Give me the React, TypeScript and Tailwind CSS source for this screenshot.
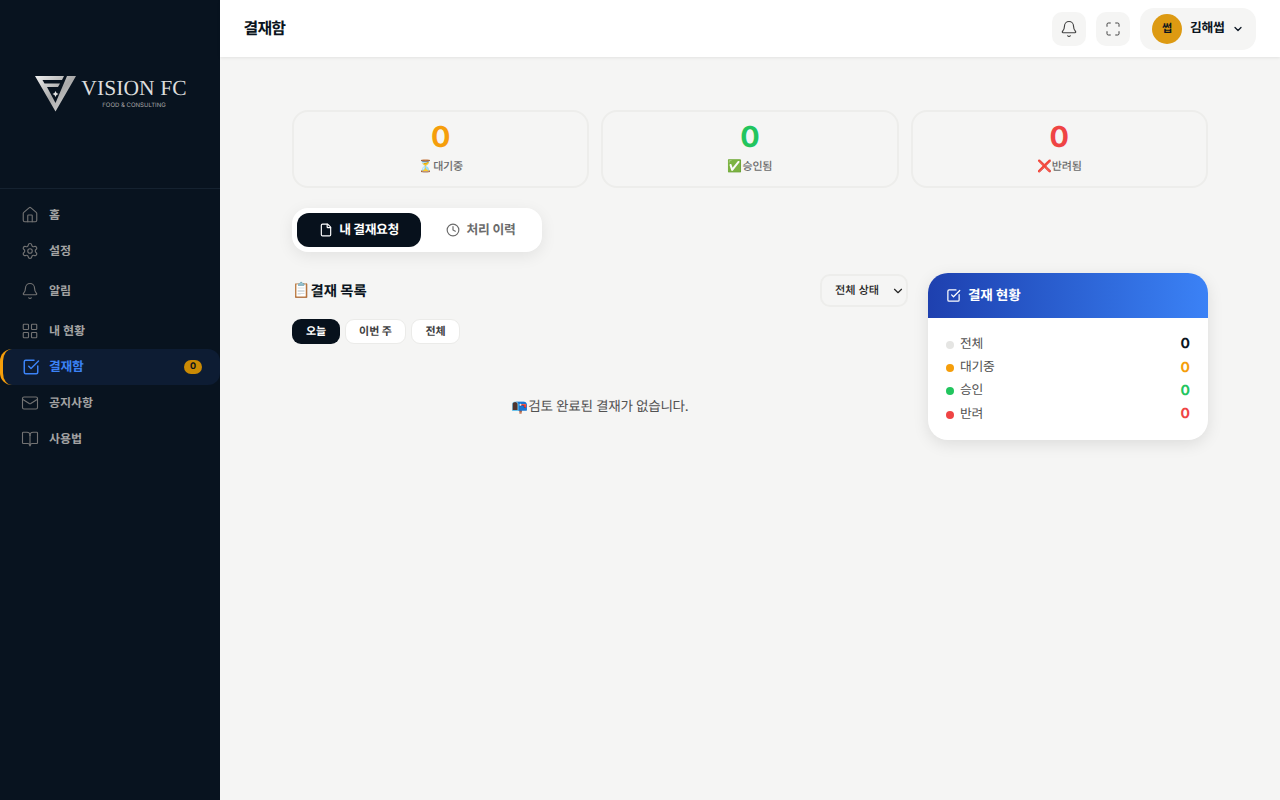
import React from "react";
import { Bell, BookOpen, ChevronDown, Clock, File, House, LayoutGrid, Mail, Maximize, Settings } from "lucide-react";

const CheckSquare = ({ className = "" }: { className?: string }) => (
  <svg viewBox="0 0 24 24" fill="none" stroke="currentColor" strokeWidth="2" strokeLinecap="round" strokeLinejoin="round" className={className}>
    <path d="M21 10.5V19a2 2 0 0 1-2 2H5a2 2 0 0 1-2-2V5a2 2 0 0 1 2-2h11" />
    <path d="m9 11 3 3L22 4" />
  </svg>
);

const Logo = () => (
  <div className="flex items-start">
    <svg viewBox="0 0 44 38" className="w-[44px] h-[38px] shrink-0">
      <defs>
        <linearGradient id="lg" x1="0" y1="0" x2="1" y2="1">
          <stop offset="0" stopColor="#f0f0f0" />
          <stop offset="0.5" stopColor="#a9a9a9" />
          <stop offset="1" stopColor="#e2e2e2" />
        </linearGradient>
      </defs>
      <path d="M1 1 H30 L28 5 H8.5 L10.5 8.5 H26 L24 12 H13 L21.5 28 L33 1 H42 L21.5 36.5 Z" fill="url(#lg)" />
      <path d="M21.5 16 L22.5 18 L24.5 19 L22.5 20 L21.5 22 L20.5 20 L18.5 19 L20.5 18 Z" fill="#e5e5e5" />
    </svg>
    <div className="ml-[3px] flex flex-col items-center pt-[1px]">
      <div className="text-[21.5px] tracking-[0.1px] leading-[24px] text-[#dcdcdc] font-['Liberation_Serif',serif] whitespace-nowrap">VISION FC</div>
      <div className="text-[6px] leading-[8px] mt-[2px] text-[#a8a8a8] font-['Inter',sans-serif] whitespace-nowrap">FOOD &amp; CONSULTING</div>
    </div>
  </div>
);

const nav = [
  { label: "홈", Icon: House, h: 36 },
  { label: "설정", Icon: Settings, h: 36 },
  { label: "알림", Icon: Bell, h: 44 },
  { label: "내 현황", Icon: LayoutGrid, h: 36 },
];
const nav2 = [
  { label: "공지사항", Icon: Mail },
  { label: "사용법", Icon: BookOpen },
];

const Stat = ({ value, color, emoji, label }: { value: number; color: string; emoji: string; label: string }) => (
  <div className="h-[78px] rounded-2xl border-2 border-[#ededeb] flex flex-col items-center pt-[6px]">
    <div className={`text-[28.8px] leading-[38px] font-bold ${color}`}>{value}</div>
    <div className="text-[11px] leading-[16px] tracking-[-0.02em] font-medium text-[#6b6b6b] mt-[2px] flex items-center">
      <span className="text-[12px] leading-[16px] font-bold">{emoji}</span>
      <span>{label}</span>
    </div>
  </div>
);

const Row = ({ dot, label, color }: { dot: string; label: string; color: string }) => (
  <div className="flex items-center justify-between h-[23.4px]">
    <div className="flex items-center gap-[6px]">
      <span className={`w-[8px] h-[8px] rounded-full mt-[2px] ${dot}`} />
      <span className="text-[12.8px] text-[#525252] pt-[1px] tracking-[-0.02em]">{label}</span>
    </div>
    <span className={`text-[14px] font-bold ${color}`}>0</span>
  </div>
);

export default function App() {
  return (
    <div className="flex h-[800px] w-[1280px] overflow-hidden bg-[#f5f5f4] [text-rendering:geometricPrecision] font-['Inter','Noto_Sans_CJK_KR',sans-serif]">
      <aside className="w-[220px] shrink-0 bg-[#08131f] flex flex-col">
        <div className="h-[189px] border-b border-[#152230] flex justify-center pt-[75px] pl-[1px]">
          <Logo />
        </div>
        <nav className="pt-[8px] flex flex-col">
          {nav.map(({ label, Icon, h }) => (
            <div key={label} className="flex items-center pl-[21px] gap-[10px] text-[#a3a3a3]" style={{ height: h }}>
              <Icon className="w-[18px] h-[18px] text-[#737373]" strokeWidth={1.5} />
              <span className="text-[12px] font-semibold">{label}</span>
            </div>
          ))}
          <div className="h-[36px] flex items-center pl-[19px] pr-[18px] gap-[9px] bg-[#0d1c33] rounded-xl border-l-[3px] border-[#f59e0b]">
            <CheckSquare className="w-[18px] h-[18px] text-[#3b82f6]" />
            <span className="text-[12.8px] tracking-[-0.02em] font-semibold text-[#3b82f6] pt-[1px]">결재함</span>
            <span className="ml-auto w-[18px] h-[14px] rounded-full bg-[#ca8a04] text-[#07111c] text-[9px] font-bold flex items-center justify-center">0</span>
          </div>
          {nav2.map(({ label, Icon }) => (
            <div key={label} className="h-[36px] flex items-center pl-[21px] gap-[10px] text-[#a3a3a3]">
              <Icon className="w-[18px] h-[18px] text-[#737373]" strokeWidth={1.5} />
              <span className="text-[12px] font-semibold">{label}</span>
            </div>
          ))}
        </nav>
      </aside>
      <div className="flex-1 flex flex-col min-w-0">
        <header className="h-[57px] bg-white shadow-[0_1px_3px_rgba(0,0,0,0.08)] flex items-center pl-[23.5px] pr-[24px] z-10">
          <h1 className="text-[16px] tracking-[-0.8px] font-bold text-[#0a1420] pb-[2px]">결재함</h1>
          <div className="ml-auto flex items-center gap-[10px]">
            <button className="w-[34px] h-[34px] rounded-[10px] bg-[#f5f5f4] flex items-center justify-center text-[#404040]">
              <Bell className="w-[18px] h-[18px]" strokeWidth={1.5} />
            </button>
            <button className="w-[34px] h-[34px] rounded-[10px] bg-[#f5f5f4] flex items-center justify-center text-[#404040]">
              <Maximize className="w-[16px] h-[16px]" strokeWidth={1.5} />
            </button>
            <div className="h-[42px] w-[116px] rounded-[14px] bg-[#f5f5f4] flex items-center pl-[12px]">
              <div className="w-[30px] h-[30px] rounded-full bg-[#dd9a12] flex items-center justify-center text-[11px] font-bold text-[#0a1420]">썹</div>
              <span className="ml-[8px] text-[12.8px] tracking-[-0.02em] font-semibold text-[#0a1420] pt-[1px]">김해썹</span>
              <ChevronDown className="ml-[7px] w-[12px] h-[12px] text-[#0a1420]" strokeWidth={2.5} />
            </div>
          </div>
        </header>
        <main className="flex-1 px-[72px] pt-[53px]">
          <div className="grid grid-cols-3 gap-[12px]">
            <Stat value={0} color="text-[#f59e0b]" emoji="⏳" label="대기중" />
            <Stat value={0} color="text-[#22c55e]" emoji="✅" label="승인됨" />
            <Stat value={0} color="text-[#ef4444]" emoji="❌" label="반려됨" />
          </div>
          <div className="mt-[20px] w-[250px] h-[44px] bg-white rounded-2xl shadow-[0_4px_16px_rgba(0,0,0,0.08)] p-[5px] flex">
            <div className="w-[124px] h-[34px] rounded-xl bg-[#07111c] text-white flex items-center justify-center gap-[6px]">
              <File className="w-[14px] h-[14px]" strokeWidth={2} />
              <span className="text-[12.8px] tracking-[-0.03em] font-bold pt-[1px]">내 결재요청</span>
            </div>
            <div className="flex-1 flex items-center justify-center gap-[7px] text-[#6b6b6b] pl-[3px]">
              <Clock className="w-[14px] h-[14px]" strokeWidth={2} />
              <span className="text-[12.8px] tracking-[-0.02em] font-bold pt-[1px]">처리 이력</span>
            </div>
          </div>
          <div className="mt-[22px] flex gap-[20px] items-start">
            <div className="w-[616px]">
              <div className="flex items-center justify-between h-[33px]">
                <h2 className="text-[14.4px] font-bold text-[#0a1420] flex items-center">
                  <span className="text-[14.8px] leading-[22px]">📋</span>
                  <span className="pt-[2px]">결재 목록</span>
                </h2>
                <div className="w-[88px] h-[33px] rounded-[10px] border-2 border-[#ededeb] flex items-center pl-[13px] text-[#262626]">
                  <span className="text-[11.2px] font-medium">전체 상태</span>
                  <ChevronDown className="ml-auto mr-[1px] w-[14px] h-[14px]" strokeWidth={2} />
                </div>
              </div>
              <div className="mt-[12px] flex gap-[5px]">
                <div className="h-[25px] w-[48px] rounded-[9px] bg-[#07111c] text-white text-[11px] font-bold flex items-center justify-center">오늘</div>
                <div className="h-[25px] w-[61px] rounded-[9px] bg-white border border-[#ebebe9] text-[#404040] text-[11px] font-bold flex items-center justify-center">이번 주</div>
                <div className="h-[25px] w-[49px] rounded-[9px] bg-white border border-[#ebebe9] text-[#404040] text-[11px] font-bold flex items-center justify-center">전체</div>
              </div>
              <div className="mt-[52px] text-center text-[13.6px] tracking-[-0.025em] leading-[22px] text-[#525252]">
                <span className="leading-[22px]">📭</span><span>검토 완료된 결재가 없습니다.</span>
              </div>
            </div>
            <div className="w-[280px] rounded-[20px] bg-white overflow-hidden shadow-[0_4px_16px_rgba(0,0,0,0.1)] -mt-[1px]">
              <div className="h-[45px] bg-gradient-to-r from-[#1e40af] to-[#3b82f6] flex items-center pl-[18px] gap-[7px] text-white">
                <CheckSquare className="w-[15px] h-[15px]" />
                <span className="text-[13.6px] tracking-[-0.01em] font-bold pt-[1px]">결재 현황</span>
              </div>
              <div className="px-[18px] pt-[14px] pb-[14px]">
                <Row dot="bg-[#e5e5e3]" label="전체" color="text-[#0a1420]" />
                <Row dot="bg-[#f59e0b]" label="대기중" color="text-[#f59e0b]" />
                <Row dot="bg-[#22c55e]" label="승인" color="text-[#22c55e]" />
                <Row dot="bg-[#ef4444]" label="반려" color="text-[#ef4444]" />
              </div>
            </div>
          </div>
        </main>
      </div>
    </div>
  );
}
